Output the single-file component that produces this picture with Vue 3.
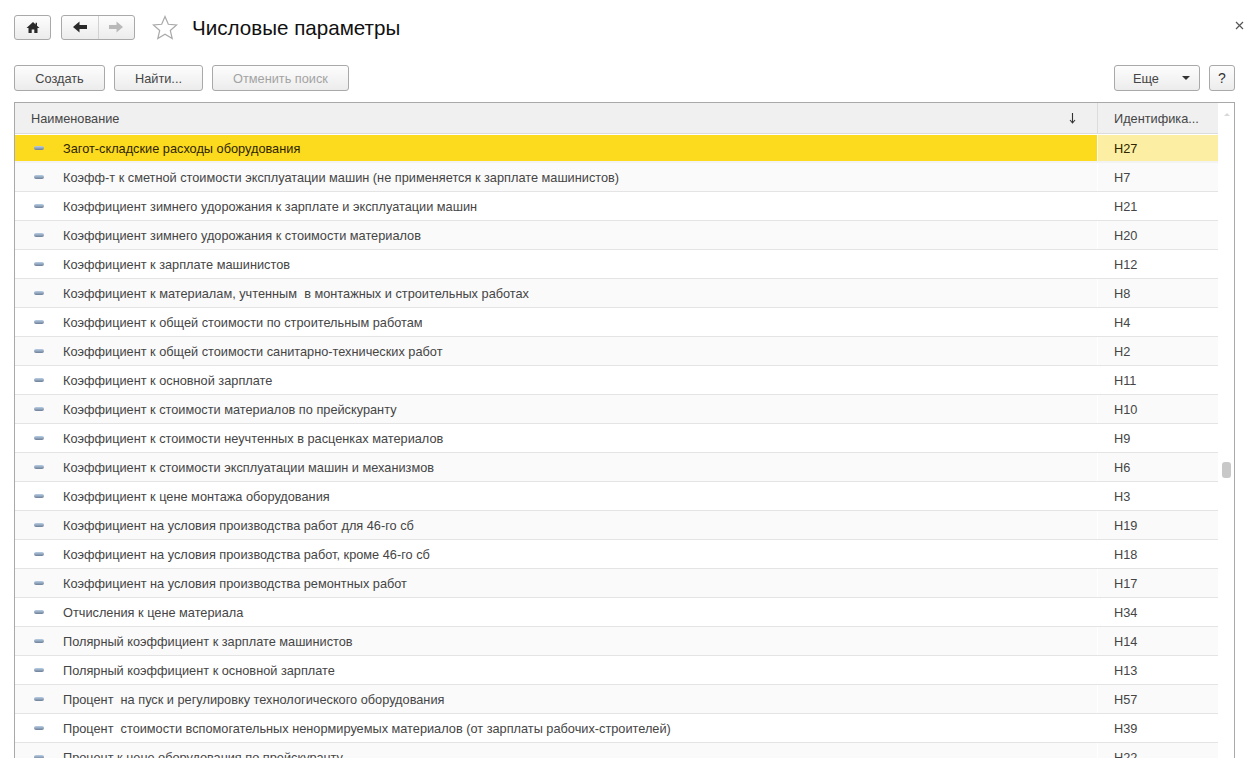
<template>
  <div class="page">
    <div class="top-bar">
      <button class="btn nav-home" type="button" aria-label="Начальная страница">
        <svg viewBox="0 0 14 12" width="14" height="13">
          <path d="M7 0.5 L0.5 6.5 H2.5 V11.5 H5.7 V8 H8.3 V11.5 H11.5 V6.5 H13.5 L11 4.2 V1.2 H9.6 V2.9 Z" fill="#2a2a2a" />
        </svg>
      </button>
      <div class="btn nav-group">
        <span class="nav-part">
          <svg viewBox="0 0 14 12" width="14" height="12">
            <path d="M0 6 L6.5 0.5 V4 H14 V8 H6.5 V11.5 Z" fill="#2a2a2a" />
          </svg>
        </span>
        <span class="nav-part nav-next">
          <svg viewBox="0 0 14 12" width="14" height="12">
            <path d="M14 6 L7.5 0.5 V4 H0 V8 H7.5 V11.5 Z" fill="#b9b9b9" />
          </svg>
        </span>
      </div>
      <svg class="star" viewBox="0 0 26 25" width="26" height="25">
        <path d="M13 1.6 L16.3 9.3 L24.6 10 L18.3 15.5 L20.2 23.6 L13 19.3 L5.8 23.6 L7.7 15.5 L1.4 10 L9.7 9.3 Z" fill="#fff" stroke="#a9a9a9" stroke-width="1.2" />
      </svg>
      <h1 class="title">Числовые параметры</h1>
      <svg class="close" viewBox="0 0 9 9" width="9" height="9">
        <path d="M1 1 L8 8 M8 1 L1 8" stroke="#555" stroke-width="1.2" fill="none" />
      </svg>
    </div>

    <div class="tool-bar">
      <button class="btn cmd btn-create" type="button">Создать</button>
      <button class="btn cmd btn-find" type="button">Найти...</button>
      <button class="btn cmd btn-cancel" type="button">Отменить поиск</button>
      <div class="spacer"></div>
      <button class="btn cmd btn-more" type="button">
        <span>Еще</span>
        <i class="caret"></i>
      </button>
      <button class="btn cmd btn-help" type="button">?</button>
    </div>

    <div class="grid">
      <div class="grid-body">
        <div class="grid-head">
          <div class="cell-name head-name">
            <span>Наименование</span>
            <svg viewBox="0 0 7 12" width="7" height="12">
              <path d="M3.5 1 V10.5 M1 8 L3.5 11 L6 8" stroke="#333" stroke-width="1.1" fill="none" />
            </svg>
          </div>
          <div class="cell-id head-id">Идентифика...</div>
        </div>
        <div
          v-for="(row, i) in rows"
          :key="row.id"
          class="row"
          :class="{ selected: i === 0, striped: i % 2 === 1 }"
        >
          <div class="cell-name">
            <i class="dash"></i>
            <span class="row-text">{{ row.name }}</span>
          </div>
          <div class="cell-id">{{ row.id }}</div>
        </div>
      </div>
      <div class="scroll">
        <i class="scroll-up"></i>
        <i class="scroll-thumb"></i>
      </div>
    </div>
  </div>
</template>

<script setup>
const rows = [
  { name: 'Загот-складские расходы оборудования', id: 'Н27' },
  { name: 'Коэфф-т к сметной стоимости эксплуатации машин (не применяется к зарплате машинистов)', id: 'Н7' },
  { name: 'Коэффициент зимнего удорожания к зарплате и эксплуатации машин', id: 'Н21' },
  { name: 'Коэффициент зимнего удорожания к стоимости материалов', id: 'Н20' },
  { name: 'Коэффициент к зарплате машинистов', id: 'Н12' },
  { name: 'Коэффициент к материалам, учтенным  в монтажных и строительных работах', id: 'Н8' },
  { name: 'Коэффициент к общей стоимости по строительным работам', id: 'Н4' },
  { name: 'Коэффициент к общей стоимости санитарно-технических работ', id: 'Н2' },
  { name: 'Коэффициент к основной зарплате', id: 'Н11' },
  { name: 'Коэффициент к стоимости материалов по прейскуранту', id: 'Н10' },
  { name: 'Коэффициент к стоимости неучтенных в расценках материалов', id: 'Н9' },
  { name: 'Коэффициент к стоимости эксплуатации машин и механизмов', id: 'Н6' },
  { name: 'Коэффициент к цене монтажа оборудования', id: 'Н3' },
  { name: 'Коэффициент на условия производства работ для 46-го сб', id: 'Н19' },
  { name: 'Коэффициент на условия производства работ, кроме 46-го сб', id: 'Н18' },
  { name: 'Коэффициент на условия производства ремонтных работ', id: 'Н17' },
  { name: 'Отчисления к цене материала', id: 'Н34' },
  { name: 'Полярный коэффициент к зарплате машинистов', id: 'Н14' },
  { name: 'Полярный коэффициент к основной зарплате', id: 'Н13' },
  { name: 'Процент  на пуск и регулировку технологического оборудования', id: 'Н57' },
  { name: 'Процент  стоимости вспомогательных ненормируемых материалов (от зарплаты рабочих-строителей)', id: 'Н39' },
  { name: 'Процент к цене оборудования по прейскуранту', id: 'Н22' },
]
</script>

<style>
html,
body {
  margin: 0;
  background: #fff;
}
</style>

<style scoped>
.page {
  height: 758px;
  overflow: hidden;
  box-sizing: border-box;
  padding: 14px 20px 0 14px;
  font-family: "Liberation Sans", Arial, sans-serif;
  font-size: 12.76px;
  color: #454545;
  background: #fff;
}

.top-bar {
  display: flex;
  align-items: center;
  height: 26px;
  position: relative;
}

.btn {
  box-sizing: border-box;
  border: 1px solid #a9a9a9;
  border-radius: 3px;
  background: linear-gradient(#fdfdfd, #ececec);
  font-family: inherit;
  font-size: 12.76px;
  color: #454545;
  padding: 0;
}

.nav-home {
  width: 37px;
  height: 25px;
  display: flex;
  align-items: center;
  justify-content: center;
}

.nav-group {
  width: 74px;
  height: 25px;
  margin-left: 10px;
  display: flex;
}

.nav-part {
  flex: 1;
  display: flex;
  align-items: center;
  justify-content: center;
}

.nav-next {
  border-left: 1px solid #d2d2d2;
}

.star {
  margin-left: 17px;
}

.title {
  margin: 2px 0 0 14px;
  font-size: 20.6px;
  font-weight: 400;
  color: #111;
}

.close {
  position: absolute;
  right: -9px;
  top: 7px;
}

.tool-bar {
  display: flex;
  margin-top: 25px;
  height: 26px;
}

.cmd {
  height: 26px;
}

.btn-create {
  width: 91px;
}

.btn-find {
  width: 89px;
  margin-left: 9px;
}

.btn-cancel {
  width: 137px;
  margin-left: 9px;
  color: #a3a3a3;
}

.spacer {
  flex: 1;
}

.btn-more {
  width: 86px;
  display: flex;
  align-items: center;
  padding: 0 9px 0 18px;
  justify-content: space-between;
}

.caret {
  width: 0;
  height: 0;
  border-left: 4px solid transparent;
  border-right: 4px solid transparent;
  border-top: 4px solid #333;
}

.btn-help {
  width: 26px;
  margin-left: 9px;
  font-size: 14px;
  color: #333;
}

.grid {
  display: flex;
  margin-top: 11px;
  border: 1px solid #a9a9a9;
  border-bottom: 0;
  background: #fff;
}

.grid-body {
  width: 1203px;
  flex: none;
}

.grid-head {
  display: flex;
  height: 30px;
  margin-bottom: 1px;
  background: #f0f0f0;
  border-bottom: 1px solid #dcdcdc;
}

.cell-name {
  width: 1082px;
  flex: none;
  display: flex;
  align-items: center;
  box-sizing: border-box;
}

.cell-id {
  flex: 1;
  display: flex;
  align-items: center;
  padding-left: 16px;
  border-left: 1px solid #fff;
}

.head-name {
  justify-content: space-between;
  padding: 0 21px 0 16px;
}

.head-id {
  border-left-color: #dcdcdc;
}

.row {
  display: flex;
  height: 28px;
  border-bottom: 1px solid #e4e4e4;
}

.row.striped {
  background: #fafafa;
}

.row.selected {
  height: 26px;
  border-bottom: 2px solid #f3f3f3;
  color: #2e2400;
}

.row.selected .cell-name {
  background: #fcdb1f;
}

.row.selected .cell-id {
  background: #fcefa3;
}

.dash {
  width: 10px;
  height: 4px;
  margin: 0 19px 0 19px;
  flex: none;
  border-radius: 2px;
  background: linear-gradient(#b8cfe6, #6d7f96);
}

.row-text {
  white-space: pre;
}

.scroll {
  flex: 1;
  position: relative;
}

.scroll-up {
  position: absolute;
  left: 6px;
  top: 10px;
  width: 0;
  height: 0;
  border-left: 3px solid transparent;
  border-right: 3px solid transparent;
  border-bottom: 3px solid #d8d8d8;
}

.scroll-thumb {
  position: absolute;
  left: 4px;
  top: 359px;
  width: 9px;
  height: 16px;
  border-radius: 3px;
  background: #c8c8c8;
}
</style>
